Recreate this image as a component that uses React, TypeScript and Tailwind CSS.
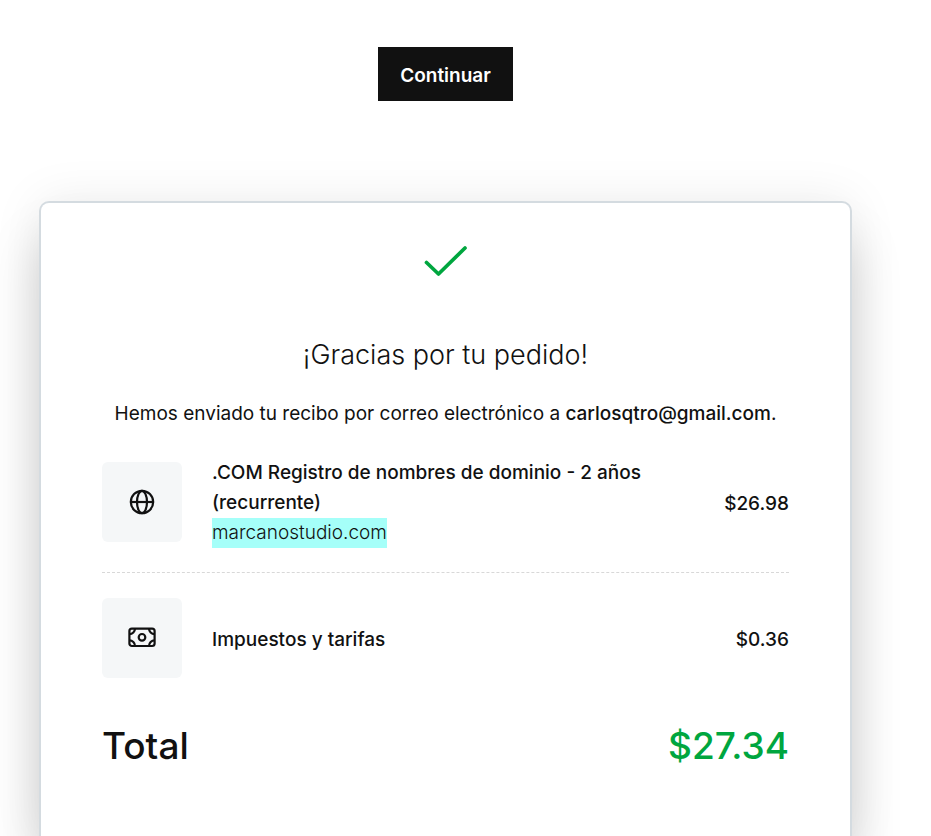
import type { ReactNode } from "react";

function CheckIcon() {
  return (
    <svg className="mx-auto block" width="44" height="32" viewBox="0 0 44 32" fill="none" stroke="#00a63f" strokeWidth="3.7" strokeLinecap="round" strokeLinejoin="round" aria-hidden="true">
      <path d="M2.5 17.5 14.5 29 41 3" />
    </svg>
  );
}

function GlobeIcon() {
  return (
    <svg width="30" height="30" viewBox="0 0 30 30" fill="none" stroke="#111" strokeWidth="2.2" aria-hidden="true">
      <circle cx="15" cy="15" r="11.2" />
      <ellipse cx="15" cy="15" rx="5" ry="11.2" />
      <path d="M3.8 15h22.4" />
    </svg>
  );
}

function CashIcon() {
  return (
    <svg width="30" height="30" viewBox="0 0 30 30" fill="none" stroke="#111" strokeWidth="2.2" aria-hidden="true">
      <rect x="2.4" y="5.6" width="25.2" height="17.4" rx="2.5" />
      <circle cx="15" cy="14.3" r="3.3" />
      <path d="M8 5.6a5.6 5.6 0 0 1-5.6 5.6M22 5.6a5.6 5.6 0 0 0 5.6 5.6M8 23a5.6 5.6 0 0 0-5.6-5.6M22 23a5.6 5.6 0 0 1 5.6-5.6" />
    </svg>
  );
}

function OrderItem({ icon, price, children }: { icon: ReactNode; price: string; children: ReactNode }) {
  return (
    <li className="flex items-center font-medium">
      <div className="flex size-20 shrink-0 items-center justify-center rounded-md bg-[#f5f7f8]">{icon}</div>
      <div className="ml-[30px] min-w-0 flex-1 pr-16">{children}</div>
      <span className="pt-1">{price}</span>
    </li>
  );
}

export default function App() {
  return (
    <main className="flex min-h-screen flex-col overflow-hidden bg-white pr-[79px] pl-[39px] pt-[47px] font-['Inter','Liberation_Sans',sans-serif] text-[19px] leading-[30px] text-[#111]">
      <button type="button" className="h-[54px] self-center bg-[#111] px-[22px] pt-1 text-[19px] font-semibold text-white">
        Continuar
      </button>

      <section className="mt-[100px] flex-1 rounded-t-[10px] border-2 border-b-0 border-[#d4dbe0] bg-white px-[61px] pt-[42px] pb-16 shadow-[0_40px_50px_rgba(0,0,0,0.17),0_0_50px_rgba(0,0,0,0.08)]">
        <CheckIcon />
        <h1 className="mt-[58px] text-center text-[27px] leading-10 font-light">¡Gracias por tu pedido!</h1>
        <p className="mt-6 text-center">
          Hemos enviado tu recibo por correo electrónico a <strong className="font-medium">carlosqtro@gmail.com</strong>.
        </p>

        <ul className="mt-[27px]">
          <OrderItem icon={<GlobeIcon />} price="$26.98">
            <p className="pt-0.5">.COM Registro de nombres de dominio - 2 años (recurrente)</p>
            <p className="w-fit bg-[#a5fff9] font-light">marcanostudio.com</p>
          </OrderItem>
          <li aria-hidden="true" className="mt-6 mb-[25px] border-t border-dashed border-[#d8d8d8]" />
          <OrderItem icon={<CashIcon />} price="$0.36">
            <p className="pt-1">Impuestos y tarifas</p>
          </OrderItem>
        </ul>

        <div className="mt-11 flex items-center justify-between text-[37px] leading-[48px] font-medium">
          <span>Total</span>
          <span className="text-[#00a63f]">$27.34</span>
        </div>
      </section>
    </main>
  );
}
